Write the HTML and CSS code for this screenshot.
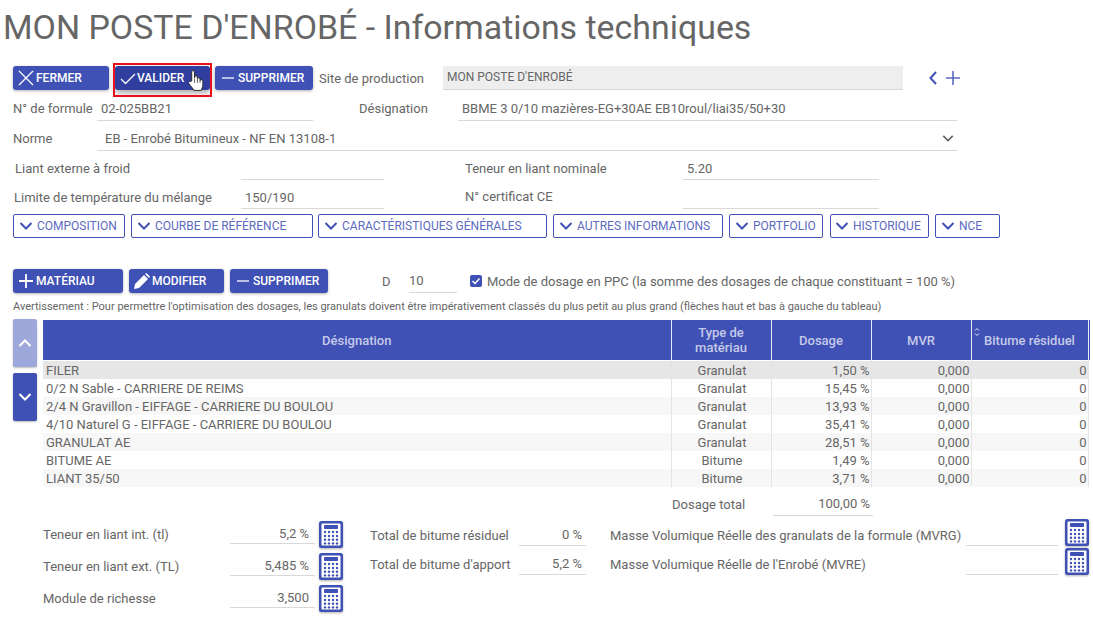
FILE: index.html
```html
<!DOCTYPE html>
<html lang="fr">
<head>
<meta charset="utf-8">
<title>Informations techniques</title>
<link rel="stylesheet" href="styles.css">
</head>
<body>
<svg class="defs" width="0" height="0" aria-hidden="true">
  <symbol id="calc" viewBox="0 0 24 27">
    <rect x="0" y="0" width="24" height="27" rx="2.5" fill="#3f51b5"/>
    <rect x="2.5" y="2.5" width="19" height="22" rx="1" fill="#fff"/>
    <rect x="5" y="4" width="14" height="4" rx=".8" fill="#3f51b5"/>
    <g fill="#3f51b5">
      <circle cx="6" cy="11" r="1.2"/><circle cx="10" cy="11" r="1.2"/><circle cx="14" cy="11" r="1.2"/><circle cx="18" cy="11" r="1.2"/>
      <circle cx="6" cy="15" r="1.2"/><circle cx="10" cy="15" r="1.2"/><circle cx="14" cy="15" r="1.2"/><circle cx="18" cy="15" r="1.2"/>
      <circle cx="6" cy="18.800" r="1.2"/><circle cx="10" cy="18.800" r="1.2"/><circle cx="14" cy="18.800" r="1.2"/><circle cx="18" cy="18.800" r="1.2"/>
      <circle cx="6" cy="22.400" r="1.2"/><circle cx="10" cy="22.400" r="1.2"/><circle cx="14" cy="22.400" r="1.2"/><circle cx="18" cy="22.400" r="1.2"/>
    </g>
  </symbol>
  <symbol id="chev" viewBox="0 0 14 10"><path d="M1.500 2 7 7.500 12.500 2" fill="none" stroke="currentColor" stroke-width="2"/></symbol>
  <symbol id="cross" viewBox="0 0 16 16"><path d="M1 1 15 15M15 1 1 15" fill="none" stroke="currentColor" stroke-width="1.300"/></symbol>
  <symbol id="check" viewBox="0 0 16 16"><path d="M1 9 5.500 13.500 15 4" fill="none" stroke="currentColor" stroke-width="1.300"/></symbol>
  <symbol id="minus" viewBox="0 0 16 16"><path d="M2 8H14" fill="none" stroke="currentColor" stroke-width="1.300"/></symbol>
  <symbol id="plus" viewBox="0 0 16 16"><path d="M1 8H15M8 1V15" fill="none" stroke="currentColor" stroke-width="1.800"/></symbol>
  <symbol id="pen" viewBox="0 0 16 16"><path d="M0 16 1 11 10 2 14 6 5 15ZM11 1 12.500 0 16 3.500 15 5Z" fill="currentColor"/></symbol>
</svg>

<h1 class="title">MON POSTE D'ENROBÉ - Informations techniques</h1>

<div class="row row-actions">
  <button class="btn w-fermer"><svg class="ic"><use href="#cross"/></svg>FERMER</button>
  <span class="focus-wrap">
    <button class="btn btn-active w-valider"><svg class="ic"><use href="#check"/></svg>VALIDER</button>
    <span class="focus-box"></span>
    <svg class="hand" viewBox="0 0 18 24"><path d="M5 13V3.500C5 1.500 8 1.500 8 3.500V10L8.300 8.500C8.500 7 11 7 11 8.800V10.500C11.500 9.300 13.800 9.500 13.800 11.200V12.300C14.500 11.300 16.800 11.500 16.800 13.300V17C16.800 20 15.500 21 15 23H7C6.500 21 4.500 19 2 16C1 14.500 2.500 12.500 4 13.500Z" fill="#fff" stroke="#222" stroke-width="1"/><path d="M8 11V15M11 11V15M13.800 12V15" stroke="#222" stroke-width=".8"/></svg>
  </span>
  <button class="btn w-supp"><svg class="ic"><use href="#minus"/></svg>SUPPRIMER</button>
  <span class="lbl lbl-site">Site de production</span>
  <span class="readonly">MON POSTE D'ENROBÉ</span>
  <svg class="nav-chev" viewBox="0 0 10 16"><path d="M8 2 2.500 8 8 14" fill="none" stroke="#3f51b5" stroke-width="2"/></svg>
  <svg class="nav-plus" viewBox="0 0 14 14"><path d="M0 7H14M7 0V14" stroke="#5c6bc0" stroke-width="1.600"/></svg>
</div>

<div class="row row-2">
  <span class="lbl lbl-num">N° de formule</span>
  <span class="field f-num">02-025BB21</span>
  <span class="lbl lbl-des">Désignation</span>
  <span class="field f-des">BBME 3 0/10 mazières-EG+30AE EB10roul/liai35/50+30</span>
</div>

<div class="row row-3">
  <span class="lbl lbl-num">Norme</span>
  <span class="field f-norme">EB - Enrobé Bitumineux - NF EN 13108-1<svg class="sel"><use href="#chev"/></svg></span>
</div>

<div class="row row-4">
  <span class="lbl lbl-a">Liant externe à froid</span>
  <span class="field f-a"></span>
  <span class="lbl lbl-b">Teneur en liant nominale</span>
  <span class="field f-b">5.20</span>
</div>

<div class="row row-5">
  <span class="lbl lbl-a">Limite de température du mélange</span>
  <span class="field f-a">150/190</span>
  <span class="lbl lbl-b">N° certificat CE</span>
  <span class="field f-b"></span>
</div>

<div class="row tabs">
  <button class="tab t1"><svg class="tc"><use href="#chev"/></svg>COMPOSITION</button>
  <button class="tab t2"><svg class="tc"><use href="#chev"/></svg>COURBE DE RÉFÉRENCE</button>
  <button class="tab t3"><svg class="tc"><use href="#chev"/></svg>CARACTÉRISTIQUES GÉNÉRALES</button>
  <button class="tab t4"><svg class="tc"><use href="#chev"/></svg>AUTRES INFORMATIONS</button>
  <button class="tab t5"><svg class="tc"><use href="#chev"/></svg>PORTFOLIO</button>
  <button class="tab t6"><svg class="tc"><use href="#chev"/></svg>HISTORIQUE</button>
  <button class="tab t7"><svg class="tc"><use href="#chev"/></svg>NCE</button>
</div>

<div class="row row-tools">
  <button class="btn w-mat"><svg class="ic"><use href="#plus"/></svg>MATÉRIAU</button>
  <button class="btn w-mod"><svg class="ic"><use href="#pen"/></svg>MODIFIER</button>
  <button class="btn w-supp2"><svg class="ic"><use href="#minus"/></svg>SUPPRIMER</button>
  <span class="lbl lbl-d">D</span>
  <span class="field f-d">10</span>
  <span class="chk"><svg viewBox="0 0 12 12"><path d="M2.500 6 5 8.500 9.500 3.500" fill="none" stroke="#fff" stroke-width="1.500"/></svg></span>
  <span class="lbl">Mode de dosage en PPC (la somme des dosages de chaque constituant = 100 %)</span>
</div>

<p class="warn">Avertissement : Pour permettre l'optimisation des dosages, les granulats doivent être impérativement classés du plus petit au plus grand (flèches haut et bas à gauche du tableau)</p>

<div class="table-zone">
  <div class="updown">
    <button class="ud ud-off"><svg><use href="#chev" transform="rotate(180 7 5)"/></svg></button>
    <button class="ud"><svg><use href="#chev"/></svg></button>
  </div>
  <table class="grid">
    <colgroup><col class="c1"><col class="c2"><col class="c3"><col class="c4"><col class="c5"><col class="c6"></colgroup>
    <thead>
      <tr><th>Désignation</th><th>Type de<br>matériau</th><th>Dosage</th><th>MVR</th><th class="th-sort"><svg class="sort" viewBox="0 0 6 10"><path d="M1 3.500 3 1.500 5 3.500M1 6.500 3 8.500 5 6.500" fill="none" stroke="#e8eaf6" stroke-width="1"/></svg>Bitume résiduel</th><th class="th-end"></th></tr>
    </thead>
    <tbody>
      <tr class="sel-row"><td>FILER</td><td class="ctr">Granulat</td><td class="num">1,50 %</td><td class="num">0,000</td><td class="num">0</td><td class="end"></td></tr>
      <tr><td>0/2 N Sable - CARRIERE DE REIMS</td><td class="ctr">Granulat</td><td class="num">15,45 %</td><td class="num">0,000</td><td class="num">0</td><td class="end"></td></tr>
      <tr class="alt"><td>2/4 N Gravillon - EIFFAGE - CARRIERE DU BOULOU</td><td class="ctr">Granulat</td><td class="num">13,93 %</td><td class="num">0,000</td><td class="num">0</td><td class="end"></td></tr>
      <tr><td>4/10 Naturel G - EIFFAGE - CARRIERE DU BOULOU</td><td class="ctr">Granulat</td><td class="num">35,41 %</td><td class="num">0,000</td><td class="num">0</td><td class="end"></td></tr>
      <tr class="alt"><td>GRANULAT AE</td><td class="ctr">Granulat</td><td class="num">28,51 %</td><td class="num">0,000</td><td class="num">0</td><td class="end"></td></tr>
      <tr><td>BITUME AE</td><td class="ctr">Bitume</td><td class="num">1,49 %</td><td class="num">0,000</td><td class="num">0</td><td class="end"></td></tr>
      <tr class="alt"><td>LIANT 35/50</td><td class="ctr">Bitume</td><td class="num">3,71 %</td><td class="num">0,000</td><td class="num">0</td><td class="end"></td></tr>
    </tbody>
  </table>
</div>

<div class="row row-total">
  <span class="lbl lbl-total">Dosage total</span>
  <span class="field f-total">100,00 %</span>
</div>

<div class="bottom">
  <div class="col col1">
    <div class="kv"><span class="lbl">Teneur en liant int. (tl)</span><span class="field val v1">5,2 %</span><svg class="calc"><use href="#calc"/></svg></div>
    <div class="kv"><span class="lbl">Teneur en liant ext. (TL)</span><span class="field val v1">5,485 %</span><svg class="calc"><use href="#calc"/></svg></div>
    <div class="kv"><span class="lbl">Module de richesse</span><span class="field val v1">3,500</span><svg class="calc"><use href="#calc"/></svg></div>
  </div>
  <div class="col col2">
    <div class="kv"><span class="lbl">Total de bitume résiduel</span><span class="field val v2">0 %</span></div>
    <div class="kv"><span class="lbl">Total de bitume d'apport</span><span class="field val v2">5,2 %</span></div>
  </div>
  <div class="col col3">
    <div class="kv"><span class="lbl">Masse Volumique Réelle des granulats de la formule (MVRG)</span><span class="field val v3"></span><svg class="calc"><use href="#calc"/></svg></div>
    <div class="kv"><span class="lbl">Masse Volumique Réelle de l'Enrobé (MVRE)</span><span class="field val v3"></span><svg class="calc"><use href="#calc"/></svg></div>
  </div>
</div>
</body>
</html>
```
FILE: styles.css
```css
* { box-sizing: border-box; }
html, body { margin: 0; padding: 0; }
body {
  width: 1093px;
  height: 619px;
  overflow: hidden;
  background: #fff;
  font-family: Roboto, "Liberation Sans", sans-serif;
  font-size: 13px;
  color: #666;
}
.defs { position: absolute; }
.title {
  margin: 0;
  padding: 10px 0 0 3px;
  height: 66px;
  font-size: 33.900px;
  line-height: 36px;
  font-weight: 400;
  color: #666;
  white-space: nowrap;
}
.row { display: flex; align-items: center; white-space: nowrap; }
.lbl { flex: none; font-size: 13px; color: #666; }

.btn {
  flex: none;
  display: flex;
  align-items: center;
  height: 24px;
  padding: 0 0 0 5px;
  border: 0;
  border-radius: 3px;
  background: #3f51b5;
  color: #fff;
  font: 500 12px Roboto, sans-serif;
  box-shadow: 0 1px 3px rgba(0,0,0,.3);
}
.btn .ic { width: 16px; height: 16px; margin-right: 2px; }
.btn-active { background: #303f9f; box-shadow: 0 3px 6px rgba(0,0,0,.35); }
.btn-active .ic { margin-right: 1px; }

.row-actions { height: 24px; padding-left: 13px; }
.w-fermer { width: 96px; }
.focus-wrap { position: relative; flex: none; margin-left: 6px; height: 24px; }
.w-valider { width: 95px; }
.focus-box {
  position: absolute;
  left: -2px; top: -3px;
  width: 99px; height: 34px;
  border: 2px solid #e8101c;
}
.hand { position: absolute; left: 72px; top: 2px; width: 17px; height: 24px; }
.w-supp { width: 98px; margin-left: 5px; }
.lbl-site { width: 124px; margin-left: 6px; }
.readonly {
  flex: none;
  width: 460px;
  height: 24px;
  line-height: 23px;
  padding-left: 4px;
  font-size: 12px;
  background: #eeeeee;
  border-bottom: 1px solid #d6d6d6;
}
.nav-chev { flex: none; width: 10px; height: 16px; margin-left: 25px; }
.nav-plus { flex: none; width: 14px; height: 14px; margin-left: 8px; }

.field {
  flex: none;
  display: block;
  border-bottom: 1px solid #d9d9d9;
  font-size: 13px;
  color: #666;
}
.row-2 { height: 31px; padding: 0 0 0 13px; align-items: flex-end; }
.row-2 .lbl { height: 24px; line-height: 24px; }
.lbl-num { width: 84px; }
.row-2 .lbl-des { width: 99px; margin-left: 46px; }
.row-2 .field, .row-3 .field { height: 24px; line-height: 24px; padding-left: 4px; }
.f-num { width: 216px; }
.f-des { width: 499px; }
.row-3 { height: 30px; padding-left: 13px; align-items: flex-end; }
.row-3 .lbl { height: 24px; line-height: 24px; }
.f-norme { width: 860px; position: relative; padding-left: 8px !important; }
.sel { position: absolute; right: 3px; top: 7px; width: 12px; height: 9px; color: #666; }

.row-4, .row-5 { padding-left: 15px; height: 29px; align-items: flex-end; }
.row-5 { padding-left: 14px; }
.row-4 .lbl, .row-5 .lbl { height: 22px; line-height: 22px; }
.lbl-a { width: 226px; }
.row-5 .lbl-a { width: 227px; }
.f-a { width: 143px; height: 22px; line-height: 22px; padding-left: 4px; }
.row-4 .lbl-b, .row-5 .lbl-b { width: 218px; margin-left: 81px; }
.row-5 .lbl-b { line-height: 20px; }
.f-b { width: 196px; height: 22px; line-height: 22px; padding-left: 4px; }

.tabs { padding-left: 13px; margin-top: 5px; height: 24px; }
.tab {
  flex: none;
  display: flex;
  align-items: center;
  height: 24px;
  padding: 0 0 0 5px;
  background: #fff;
  border: 1px solid #3f51b5;
  border-radius: 2px;
  color: #5c6bc0;
  font: 400 12px Roboto, sans-serif;
}
.tc { width: 14px; height: 10px; margin-right: 4px; color: #3f51b5; }
.t1 { width: 112px; }
.t2 { width: 182px; margin-left: 6px; }
.t3 { width: 229px; margin-left: 5px; }
.t4 { width: 170px; margin-left: 6px; }
.t5 { width: 94px; margin-left: 6px; }
.t6 { width: 99px; margin-left: 7px; padding-left: 4px; }
.t7 { width: 65px; margin-left: 6px; }

.row-tools { padding-left: 13px; margin-top: 31px; height: 24px; }
.w-mat { width: 110px; }
.w-mod { width: 95px; margin-left: 6px; }
.w-supp2 { width: 98px; margin-left: 6px; }
.lbl-d { width: 27px; margin-left: 54px; }
.f-d { width: 48px; height: 24px; line-height: 24px; }
.chk {
  flex: none;
  width: 12px; height: 12px;
  margin: 0 5px 0 13px;
  border-radius: 2px;
  background: #3f51b5;
  display: block;
}
.chk svg { display: block; width: 12px; height: 12px; }

.warn {
  margin: 6px 0 0 13px;
  height: 15px;
  font-size: 11px;
  line-height: 15px;
  white-space: nowrap;
  color: #666;
}
.table-zone { display: flex; align-items: flex-start; padding-left: 13px; margin-top: 5px; height: 173px; }
.updown { flex: none; width: 24px; display: flex; flex-direction: column; gap: 6px; }
.ud {
  width: 24px; height: 48px;
  border: 0; padding: 0;
  border-radius: 2px;
  background: #3f51b5;
  color: #fff;
  display: flex; align-items: center; justify-content: center;
  box-shadow: 0 1px 2px rgba(0,0,0,.25);
}
.ud svg { width: 14px; height: 10px; }
.ud-off { background: #9fa8da; }

.grid {
  flex: none;
  margin: 1px 0 0 6px;
  width: 1047px;
  table-layout: fixed;
  border-collapse: collapse;
}
.c1 { width: 628px; }
.c2, .c3, .c4 { width: 100px; }
.c5 { width: 117px; }
.c6 { width: 2px; }
.grid th {
  height: 40px;
  padding: 1px 0 0;
  background: #3f51b5;
  color: #c5cae9;
  font-size: 13px;
  font-weight: 500;
  line-height: 15px;
  text-align: center;
  border-right: 1px solid #e8eaf6;
}
.grid .th-sort { position: relative; }
.grid .th-end { border-right: 0; }
.sort { position: absolute; left: 2px; top: 7px; width: 6px; height: 10px; }
.grid td {
  height: 18px;
  padding: 1px 1px 0 3px;
  line-height: 17px;
  font-size: 13px;
  color: #666;
  white-space: nowrap;
  border-right: 1px solid #e4e4e4;
}
.grid tbody tr { height: 18px; }
.grid tbody tr:first-child td { border-top: 1px solid #fff; }
.grid .ctr { text-align: center; }
.grid .num { text-align: right; }
.grid td.end { padding: 0; border-right: 0; background: #fff; }
.alt td { background: #f7f7f7; }
.sel-row td { background: #e6e6e6; }

.row-total { padding-left: 672px; height: 24px; align-items: flex-end; }
.lbl-total { width: 101px; height: 23px; line-height: 23px; }
.f-total { width: 100px; height: 24px; line-height: 24px; text-align: right; padding-right: 3px; }

.bottom { display: flex; margin-top: 2px; align-items: flex-start; }
.col { flex: none; display: flex; flex-direction: column; }
.kv { display: flex; align-items: center; height: 32px; }
.kv .lbl { flex: none; }
.val { height: 27px; line-height: 27px; text-align: right; padding: 2px 4px 0 0; }
.calc {
  flex: none;
  width: 24px; height: 27px;
  margin-left: 4px;
  filter: drop-shadow(0 1px 1px rgba(0,0,0,.3));
}
.col1 { width: 370px; padding-left: 43px; }
.col1 .lbl { width: 187px; }
.col1 .val { align-self: flex-start; height: 26px; padding: 3px 6px 0 0; line-height: 26px; }
.v1 { width: 85px; }
.col2 { width: 240px; }
.col2 .kv { height: 29px; }
.col2 .lbl, .col3 .lbl { padding-top: 6px; }
.col2 .lbl { width: 149px; }
.v2 { width: 67px; }
.col3 .kv { height: 29px; }
.col3 .lbl { width: 356px; }
.v3 { width: 92px; }
.col3 .calc { margin-left: 7px; }
```
